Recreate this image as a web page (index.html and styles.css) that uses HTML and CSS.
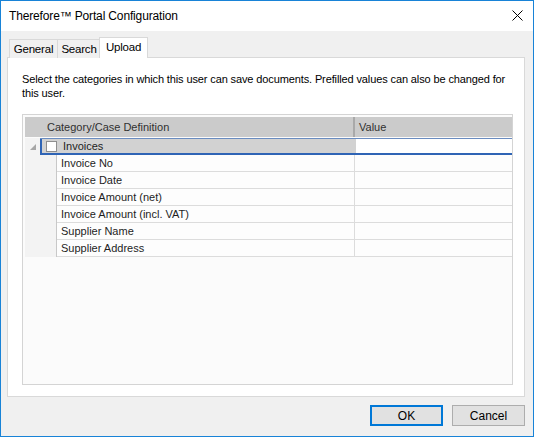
FILE: index.html
```html
<!DOCTYPE html>
<html>
<head>
<meta charset="utf-8">
<link rel="stylesheet" href="styles.css">
</head>
<body>
<div class="window">
  <div class="titlebar">
    <span class="title">Therefore™ Portal Configuration</span>
    <svg class="close" width="11" height="11" viewBox="0 0 11 11"><path d="M0.5 0.5 L10.5 10.5 M10.5 0.5 L0.5 10.5" stroke="#000" stroke-width="1" fill="none"/></svg>
  </div>
  <div class="body">
    <div class="tabs">
      <div class="tab t-general">General</div>
      <div class="tab t-search">Search</div>
      <div class="tab active">Upload</div>
    </div>
    <div class="panel">
      <p class="desc">Select the categories in which this user can save documents. Prefilled values can also be changed for<br>this user.</p>
      <div class="grid">
        <div class="ghead">
          <div class="hcell hname">Category/Case Definition</div>
          <div class="hcell hval">Value</div>
        </div>
        <div class="grow parent">
          <div class="expander"><svg width="6" height="6" viewBox="0 0 6 6"><path d="M6 0 L6 6 L0 6 Z" fill="#a6a6a6"/></svg></div>
          <div class="pname"><span class="check"></span><span>Invoices</span></div>
          <div class="pval"></div>
        </div>
        <div class="children">
          <div class="indent"></div>
          <div class="rows">
            <div class="crow"><div class="cname">Invoice No</div><div class="cval"></div></div>
            <div class="crow"><div class="cname">Invoice Date</div><div class="cval"></div></div>
            <div class="crow"><div class="cname">Invoice Amount (net)</div><div class="cval"></div></div>
            <div class="crow"><div class="cname">Invoice Amount (incl. VAT)</div><div class="cval"></div></div>
            <div class="crow"><div class="cname">Supplier Name</div><div class="cval"></div></div>
            <div class="crow"><div class="cname">Supplier Address</div><div class="cval"></div></div>
          </div>
        </div>
      </div>
    </div>
    <div class="buttons">
      <button class="btn default">OK</button>
      <button class="btn">Cancel</button>
    </div>
  </div>
</div>
</body>
</html>
```
FILE: styles.css
```css
* { box-sizing: border-box; }
html, body { margin: 0; padding: 0; }
body {
  width: 534px;
  height: 437px;
  font-family: "Liberation Sans", Arial, sans-serif;
  font-size: 12px;
  color: #000;
  background: #fff;
}
.window {
  width: 534px;
  height: 437px;
  border: 1px solid #1883d7;
  background: #f0f0f0;
  display: flex;
  flex-direction: column;
}
.titlebar {
  height: 30px;
  background: #fff;
  display: flex;
  align-items: center;
  justify-content: space-between;
  padding: 0 10px 0 8px;
  flex: none;
}
.title { font-size: 12px; letter-spacing: -0.15px; color: #000; }
.close { display: block; margin-top: -1px; }
.body {
  flex: 1;
  padding: 0 8px 0 6px;
  display: flex;
  flex-direction: column;
}
.tabs {
  display: flex;
  align-items: flex-end;
  height: 27px;
  padding-left: 2px;
  position: relative;
  z-index: 1;
  margin-bottom: -1px;
}
.tab {
  height: 19px;
  border: 1px solid #d9d9d9;
  border-bottom: none;
  background: #f0f0f0;
  display: flex;
  align-items: center;
  justify-content: center;
  font-size: 11.5px;
  letter-spacing: -0.2px;
  margin-right: -1px;
}
.t-general { width: 49px; }
.t-search { width: 44px; }
.tab.active {
  width: 49px;
  height: 21px;
  background: #fff;
  margin: 0 0 0 -1px;
  padding-bottom: 2px;
}
.panel {
  height: 340px;
  background: #fff;
  border: 1px solid #d9d9d9;
  padding: 14px 11px 0 14px;
}
.desc {
  margin: 0;
  font-size: 11px;
  line-height: 14px;
  letter-spacing: -0.12px;
  white-space: nowrap;
  color: #000;
}
.grid {
  margin-top: 14px;
  height: 271px;
  border: 1px solid #d4d4d4;
  background: #fbfbfb;
  padding: 2px 0 0 2px;
  font-size: 11px;
  color: #1e1e1e;
}
.ghead {
  display: flex;
  height: 20px;
  background: #cbcbcb;
}
.hcell {
  display: flex;
  align-items: center;
  color: #303030;
}
.hname {
  width: 330px;
  padding-left: 22px;
  border-right: 2px solid #a9a9a9;
}
.hval { flex: 1; padding-left: 4px; }
.grow.parent {
  display: flex;
  height: 17px;
  border-top: 1px solid #6a8cc0;
  border-bottom: 2px solid #2f64b5;
  margin-top: 1px;
}
.expander {
  width: 15px;
  display: flex;
  align-items: center;
  justify-content: center;
  margin-top: -1px;
  margin-bottom: -2px;
  background: #f3f3f3;
}
.pname {
  width: 316px;
  background: #d2d2d2;
  border-left: 2px solid #2f64b5;
  display: flex;
  align-items: center;
  padding-left: 4px;
}
.check {
  width: 11px;
  height: 11px;
  border: 1px solid #8f8f8f;
  background: #fff;
  margin-right: 6px;
}
.pval { flex: 1; background: #fff; }
.children { display: flex; }
.indent {
  width: 32px;
  background: #f3f3f3;
  border-right: 1px solid #c8c8c8;
}
.rows { flex: 1; }
.crow {
  display: flex;
  height: 17px;
  border-bottom: 1px solid #dcdcdc;
  background: #fdfdfd;
}
.cname {
  width: 298px;
  padding-left: 4px;
  display: flex;
  align-items: center;
  border-right: 1px solid #dcdcdc;
}
.cval { flex: 1; }
.buttons {
  display: flex;
  justify-content: flex-end;
  gap: 9px;
  margin-top: 8px;
}
.btn {
  width: 73px;
  height: 21px;
  background: #e1e1e1;
  border: 1px solid #adadad;
  font-family: "Liberation Sans", Arial, sans-serif;
  font-size: 12px;
  color: #000;
  padding: 0;
  margin: 0;
}
.btn.default { border: 2px solid #0078d7; }
```
